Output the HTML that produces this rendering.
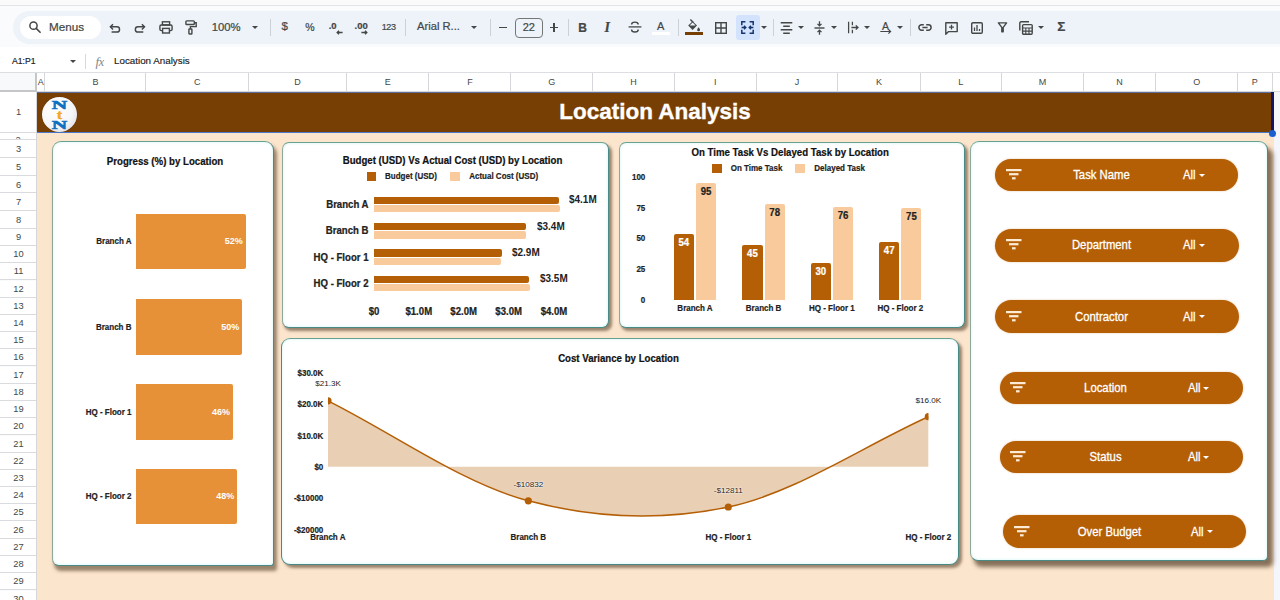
<!DOCTYPE html>
<html><head><meta charset="utf-8">
<style>
*{box-sizing:border-box;margin:0;padding:0}
html,body{width:1280px;height:600px;overflow:hidden;background:#fff;font-family:"Liberation Sans",sans-serif;}
#root{position:relative;width:1280px;height:600px;overflow:hidden;background:#f9fbfd}
.abs{position:absolute}
.t{position:absolute;white-space:nowrap;line-height:1}
#topstrip{left:0;top:0;width:1280px;height:5px;background:#fafafa}
#topline{left:0;top:5px;width:1280px;height:1px;background:#e3e4e6}
#toolbar{left:13px;top:11px;width:1290px;height:33px;background:#eef2f9;border-radius:17px}
#search{left:20px;top:16px;width:81px;height:23px;background:#fff;border-radius:12px}
#fbar{left:0;top:47px;width:1280px;height:25px;background:#fff}
#fline{left:0;top:72px;width:1280px;height:1px;background:#dcdee1}
.ui{color:#444746;font-size:12.5px;-webkit-text-stroke:.22px #444746}
.sep{position:absolute;top:19px;width:1px;height:17px;background:#cdd0d5}
.caret{position:absolute;width:0;height:0;border-left:3px solid transparent;border-right:3px solid transparent;border-top:3.2px solid #444746}
#colhdr{left:0;top:73px;width:1280px;height:19px;background:#fff}
.ch{position:absolute;top:73px;height:19px;border-right:1px solid #d5d7da;font-size:9px;color:#444746;text-align:center;line-height:19px}
.rh{position:absolute;left:0;width:37px;border-bottom:1px solid #d9dbde;background:#fff;font-size:9.3px;color:#444746;text-align:center}
#sheet{left:37px;top:92px;width:1237px;height:508px;background:#fce5cd}
#banner{left:37px;top:92px;width:1236px;height:41px;background:#783f04}
.card{position:absolute;background:#fff;border:1.5px solid #4a8a86;border-top-color:#6aa08f;border-left-color:#8fa89c;border-left-width:1.2px;border-radius:8px}
.pill{position:absolute;background:#b45f06;border-radius:17px;height:32.7px;box-shadow:0 0 2px rgba(180,95,6,.4)}
.pill .t{color:#fff;font-size:12.5px;top:10.6px;-webkit-text-stroke:.3px #fff;transform:scaleX(.905)}
svg{position:absolute;overflow:visible}
.b{font-weight:bold}
.ct{font-size:9.67px;color:#111;font-weight:bold;text-align:center;transform:translateY(.75px) scaleY(1.06);-webkit-text-stroke:.2px #111}
.l8{font-size:8px;color:#222;font-weight:bold;transform:translateY(.3px) scaleY(1.08);-webkit-text-stroke:.18px #222}
.l96{font-size:9.6px;color:#222;font-weight:bold;transform:scaleY(1.1);-webkit-text-stroke:.22px currentColor}
</style></head><body>
<div id="root">
<div class="abs" id="topstrip"></div><div class="abs" id="topline"></div>
<div class="abs" id="toolbar"></div><div class="abs" id="search"></div>
<div class="abs" id="fbar"></div><div class="abs" id="fline"></div>
<svg width="14" height="14" viewBox="0 0 14 14" style="left:27.5px;top:20.0px"><circle cx="5.5" cy="5.7" r="3.6" fill="none" stroke="#444746" stroke-width="1.5"/><path d="M8.2 8.4 L12.1 12.3" stroke="#444746" stroke-width="1.6" stroke-linecap="round"/></svg>
<div class="t ui" style="left:49px;top:21px;font-size:11.7px">Menus</div>
<svg width="1280" height="50" viewBox="0 0 1280 50" style="left:0;top:0"><g fill="none" stroke="#444746" stroke-width="1.45"><path d="M110.6 26.8 H116.9 a2.65 2.65 0 0 1 0 5.3 H111.6"/><path d="M113 24.2 L110.4 26.8 L113 29.4"/><path d="M144.3 26.8 H138 a2.65 2.65 0 0 0 0 5.3 H143.3"/><path d="M141.9 24.2 L144.5 26.8 L141.9 29.4"/><path d="M631.6 24.6 a3.3 2.5 0 0 1 6.6 0 M631.6 29.4 a3.3 2.6 0 0 0 6.6 0"/><path d="M628.6 26.9 H641.4" stroke-width="1.3"/></g></svg>
<svg width="14" height="13" viewBox="0 0 14 13" style="left:159.0px;top:21.0px"><rect x="3.4" y="0.8" width="7.2" height="3.2" fill="none" stroke="#444746" stroke-width="1.4"/><rect x="0.9" y="4" width="12.2" height="5.6" rx="1.4" fill="none" stroke="#444746" stroke-width="1.4"/><rect x="3.6" y="7.4" width="6.8" height="4.6" fill="#eef2f9" stroke="#444746" stroke-width="1.4"/></svg>
<svg width="12" height="15" viewBox="0 0 12 15" style="left:185.0px;top:20.0px"><rect x="0.9" y="0.9" width="8.4" height="3.6" rx="0.8" fill="none" stroke="#444746" stroke-width="1.4"/><path d="M9.3 2.7 H11.2 V6.6 H5.4 V9" fill="none" stroke="#444746" stroke-width="1.4"/><rect x="3.9" y="9" width="3" height="5" rx="0.6" fill="none" stroke="#444746" stroke-width="1.4"/></svg>
<div class="t ui" style="left:211.7px;top:22.2px;font-size:11.3px">100%</div>
<div class="caret" style="left:252px;top:25.7px"></div>
<div class="sep" style="left:269.5px"></div>
<div class="t ui" style="left:281.5px;top:21.3px;font-size:11.5px">$</div>
<div class="t ui" style="left:305.3px;top:21.5px;font-size:10.5px">%</div>
<div class="t ui b" style="left:328.7px;top:20.8px;font-size:9.5px">.0</div>
<svg width="7" height="5" viewBox="0 0 7 5" style="left:335.7px;top:29.9px"><path d="M6.6 2.5 H1.2 M3 0.7 L1.2 2.5 L3 4.3" fill="none" stroke="#444746" stroke-width="1.4"/></svg>
<div class="t ui b" style="left:354.5px;top:20.8px;font-size:9.5px">.00</div>
<svg width="7" height="5" viewBox="0 0 7 5" style="left:361.2px;top:29.9px"><path d="M0.4 2.5 H5.8 M4 0.7 L5.8 2.5 L4 4.3" fill="none" stroke="#444746" stroke-width="1.4"/></svg>
<div class="t ui" style="left:381.7px;top:22.6px;font-size:9px;letter-spacing:-.4px">123</div>
<div class="sep" style="left:404.5px"></div>
<div class="t ui" style="left:417px;top:21.3px;font-size:11.2px">Arial R...</div>
<div class="caret" style="left:471px;top:25.7px"></div>
<div class="sep" style="left:489.5px"></div>
<div class="abs" style="left:498.5px;top:26.6px;width:8.5px;height:1.5px;background:#444746"></div>
<div class="abs" style="left:515px;top:18px;width:27.5px;height:19.5px;border:1px solid #747775;border-radius:4px"></div>
<div class="t ui" style="left:515px;width:27.5px;text-align:center;top:22px;font-size:11px">22</div>
<div class="abs" style="left:549.8px;top:26.6px;width:8.5px;height:1.5px;background:#444746"></div><div class="abs" style="left:553.3px;top:23.1px;width:1.5px;height:8.5px;background:#444746"></div>
<div class="sep" style="left:567.5px"></div>
<div class="t ui b" style="left:578.3px;top:21.5px;font-size:12px">B</div>
<div class="t ui b" style="left:604.5px;top:20.5px;font-size:14px;font-style:italic;font-family:'Liberation Serif',serif">I</div>
<div class="t ui" style="left:657px;top:20.5px;font-size:11px">A</div>
<div class="abs" style="left:652px;top:31.5px;width:17.5px;height:3px;background:#fff"></div>
<div class="sep" style="left:677.5px"></div>
<svg width="15" height="13" viewBox="0 0 15 13" style="left:685.5px;top:19.0px"><path d="M2.2 6.6 L6.6 2.2 L11 6.6 L6.6 11 Z" fill="#444746"/><path d="M4.4 0.6 L7.4 3.6" stroke="#444746" stroke-width="1.4"/><path d="M3.6 6.4 H9.6 L6.6 3.4 Z" fill="#eef2f9"/><path d="M12.6 8.2 c0.9 1.3 1.4 2 1.4 2.7 a1.4 1.4 0 0 1 -2.8 0 c0 -0.7 0.5 -1.4 1.4 -2.7z" fill="#444746"/></svg>
<div class="abs" style="left:684.5px;top:32px;width:18px;height:3px;background:#783f04"></div>
<svg width="12" height="12" viewBox="0 0 12 12" style="left:715.0px;top:21.5px"><rect x="0.7" y="0.7" width="10.6" height="10.6" fill="none" stroke="#444746" stroke-width="1.4"/><path d="M6 0.7 V11.3 M0.7 6 H11.3" stroke="#444746" stroke-width="1.4"/></svg>
<div class="abs" style="left:735.5px;top:15px;width:24px;height:24.5px;background:#d3e3fd;border-radius:3px"></div>
<svg width="13" height="13" viewBox="0 0 13 13" style="left:741.0px;top:21.0px"><path d="M0.8 4.2 V0.8 H4.4 M8.6 0.8 H12.2 V4.2 M12.2 8.8 V12.2 H8.6 M4.4 12.2 H0.8 V8.8" fill="none" stroke="#17356b" stroke-width="1.5"/><path d="M0.6 6.5 H4.6 M3 4.7 L4.8 6.5 L3 8.3 M12.4 6.5 H8.4 M10 4.7 L8.2 6.5 L10 8.3" fill="none" stroke="#17356b" stroke-width="1.4"/></svg>
<div class="caret" style="left:761px;top:25.7px"></div>
<div class="sep" style="left:773px"></div>
<svg width="13" height="12" viewBox="0 0 13 12" style="left:780.0px;top:21.5px"><path d="M0.7 0.8 H12.3 M3.2 4.3 H9.8 M0.7 7.8 H12.3 M3.2 11.3 H9.8" stroke="#444746" stroke-width="1.5"/></svg>
<div class="caret" style="left:798px;top:25.7px"></div>
<svg width="11" height="14" viewBox="0 0 11 14" style="left:814.0px;top:20.5px"><path d="M0.5 7 H10.5" stroke="#444746" stroke-width="1.4"/><path d="M5.5 0.3 V4.6 M3.5 2.9 L5.5 4.9 L7.5 2.9 M5.5 13.7 V9.4 M3.5 11.1 L5.5 9.1 L7.5 11.1" fill="none" stroke="#444746" stroke-width="1.3"/></svg>
<div class="caret" style="left:831px;top:25.7px"></div>
<svg width="12" height="13" viewBox="0 0 12 13" style="left:846.5px;top:21.0px"><path d="M1.6 0.8 V12.2 M5.4 0.8 V4.2 M5.4 8.8 V12.2" stroke="#444746" stroke-width="1.25"/><path d="M4.4 6.5 H10.8 M8.8 4.4 L11 6.5 L8.8 8.6" fill="none" stroke="#444746" stroke-width="1.3"/></svg>
<div class="caret" style="left:864px;top:25.7px"></div>
<div class="t ui" style="left:882px;top:21px;font-size:10.5px">A</div>
<svg width="12" height="5" viewBox="0 0 12 5" style="left:880.0px;top:29.1px"><path d="M0.3 2.5 H10.6 M8.4 0.4 L10.6 2.5 L8.4 4.6" fill="none" stroke="#444746" stroke-width="1.2"/></svg>
<div class="caret" style="left:897px;top:25.7px"></div>
<div class="sep" style="left:910px"></div>
<svg width="14" height="7" viewBox="0 0 14 7" style="left:918.0px;top:24.0px"><path d="M5.8 0.8 H3.6 a2.7 2.7 0 0 0 0 5.4 H5.8 M8.2 0.8 H10.4 a2.7 2.7 0 0 1 0 5.4 H8.2 M4.4 3.5 H9.6" fill="none" stroke="#444746" stroke-width="1.5"/></svg>
<svg width="13" height="13" viewBox="0 0 13 13" style="left:945.0px;top:21.5px"><path d="M0.8 0.8 H12.2 V9.6 H3.6 L0.8 12.2 Z" fill="none" stroke="#444746" stroke-width="1.4" stroke-linejoin="round"/><path d="M6.5 2.8 V7.6 M4.1 5.2 H8.9" stroke="#444746" stroke-width="1.3"/></svg>
<svg width="12" height="12" viewBox="0 0 12 12" style="left:970.8px;top:21.5px"><rect x="0.7" y="0.7" width="10.6" height="10.6" rx="1.2" fill="none" stroke="#444746" stroke-width="1.4"/><path d="M3.5 9 V5.4 M6 9 V3 M8.5 9 V7" stroke="#444746" stroke-width="1.3"/></svg>
<svg width="11" height="11" viewBox="0 0 11 11" style="left:996.5px;top:22.0px"><path d="M1.4 0.9 H9.6 L6.2 5.4 V9.8 H4.8 V5.4 Z" fill="none" stroke="#444746" stroke-width="1.4" stroke-linejoin="round"/></svg>
<svg width="14" height="14" viewBox="0 0 14 14" style="left:1019.0px;top:20.5px"><path d="M0.8 9.4 V2 a1.2 1.2 0 0 1 1.2 -1.2 H10" fill="none" stroke="#444746" stroke-width="1.4"/><rect x="3.6" y="3.6" width="9.6" height="9.6" rx="1" fill="none" stroke="#444746" stroke-width="1.4"/><path d="M3.6 7 H13.2 M3.6 10.1 H13.2 M6.8 7 V13.2 M10 7 V13.2" stroke="#444746" stroke-width="1.1"/></svg>
<div class="caret" style="left:1038px;top:25.7px"></div>
<div class="t ui b" style="left:1057.3px;top:20.3px;font-size:13.5px">&Sigma;</div>
<div class="t" style="left:11.6px;top:56.2px;font-size:9.6px;color:#202124;-webkit-text-stroke:.2px #202124;transform:scaleX(.9);transform-origin:left center">A1:P1</div>
<div class="caret" style="left:69.5px;top:59.5px;border-left-width:3.2px;border-right-width:3.2px;border-top-width:3.6px"></div>
<div class="abs" style="left:85px;top:54px;width:1px;height:15px;background:#d6d8db"></div>
<div class="t" style="left:95.5px;top:54.5px;font-size:13px;color:#80868b;font-style:italic;font-family:'Liberation Serif',serif">f<span style="font-size:12px;margin-left:-.3px">x</span></div>
<div class="t" style="left:114px;top:56px;font-size:9.8px;color:#202124;-webkit-text-stroke:.15px #202124">Location Analysis</div>
<div class="abs" id="colhdr"></div>
<div class="ch" style="left:37px;width:8.3px">A</div>
<div class="ch" style="left:45.3px;width:101.2px">B</div>
<div class="ch" style="left:146.5px;width:102.5px">C</div>
<div class="ch" style="left:249px;width:98.0px">D</div>
<div class="ch" style="left:347px;width:82.4px">E</div>
<div class="ch" style="left:429.4px;width:82.0px">F</div>
<div class="ch" style="left:511.4px;width:81.6px">G</div>
<div class="ch" style="left:593px;width:82.0px">H</div>
<div class="ch" style="left:675px;width:81.6px">I</div>
<div class="ch" style="left:756.6px;width:81.9px">J</div>
<div class="ch" style="left:838.5px;width:82.0px">K</div>
<div class="ch" style="left:920.5px;width:81.7px">L</div>
<div class="ch" style="left:1002.2px;width:81.6px">M</div>
<div class="ch" style="left:1083.8px;width:72.6px">N</div>
<div class="ch" style="left:1156.4px;width:81.6px">O</div>
<div class="ch" style="left:1238px;width:34.5px">P</div>
<div class="abs" style="left:0;top:73px;width:37px;height:19px;background:#f8f9fa;border-right:2px solid #c4c7c5;border-bottom:2px solid #c4c7c5"></div>
<div class="abs" style="left:37px;top:91px;width:1243px;height:1px;background:#d5d7da"></div>
<div class="abs" id="sheet"></div>
<div class="abs" style="left:1274px;top:92px;width:6px;height:508px;background:#f5f6fb"></div>
<div class="rh" style="top:92.00px;height:41.00px;line-height:41.00px">1</div>
<div class="rh" style="top:133px;height:7.30px;overflow:hidden"><span style="position:absolute;left:0;width:36px;top:2.7px;line-height:9px">2</span></div>
<div class="rh" style="top:140.30px;height:17.70px;line-height:18.30px">3</div>
<div class="rh" style="top:158.00px;height:17.70px;line-height:18.30px">5</div>
<div class="rh" style="top:175.70px;height:17.60px;line-height:18.20px">6</div>
<div class="rh" style="top:193.30px;height:17.90px;line-height:18.50px">7</div>
<div class="rh" style="top:211.20px;height:17.50px;line-height:18.10px">8</div>
<div class="rh" style="top:228.70px;height:17.30px;line-height:17.90px">9</div>
<div class="rh" style="top:246.00px;height:17.30px;line-height:17.90px">10</div>
<div class="rh" style="top:263.30px;height:17.20px;line-height:17.80px">11</div>
<div class="rh" style="top:280.50px;height:17.20px;line-height:17.80px">12</div>
<div class="rh" style="top:297.70px;height:17.00px;line-height:17.60px">13</div>
<div class="rh" style="top:314.70px;height:17.30px;line-height:17.90px">14</div>
<div class="rh" style="top:332.00px;height:17.30px;line-height:17.90px">15</div>
<div class="rh" style="top:349.30px;height:17.20px;line-height:17.80px">16</div>
<div class="rh" style="top:366.50px;height:17.30px;line-height:17.90px">17</div>
<div class="rh" style="top:383.80px;height:17.20px;line-height:17.80px">18</div>
<div class="rh" style="top:401.00px;height:17.30px;line-height:17.90px">19</div>
<div class="rh" style="top:418.30px;height:17.20px;line-height:17.80px">20</div>
<div class="rh" style="top:435.50px;height:17.20px;line-height:17.80px">21</div>
<div class="rh" style="top:452.70px;height:17.20px;line-height:17.80px">22</div>
<div class="rh" style="top:469.90px;height:17.20px;line-height:17.80px">23</div>
<div class="rh" style="top:487.10px;height:17.10px;line-height:17.70px">24</div>
<div class="rh" style="top:504.20px;height:17.10px;line-height:17.70px">25</div>
<div class="rh" style="top:521.30px;height:17.40px;line-height:18.00px">26</div>
<div class="rh" style="top:538.70px;height:17.30px;line-height:17.90px">27</div>
<div class="rh" style="top:556.00px;height:17.30px;line-height:17.90px">28</div>
<div class="rh" style="top:573.30px;height:17.20px;line-height:17.80px">29</div>
<div class="rh" style="top:590.50px;height:17.30px;line-height:17.90px">30</div>
<div class="abs" style="left:36px;top:92px;width:1px;height:508px;background:#d5d7da"></div>
<div class="abs" id="banner"></div>
<div class="abs" style="left:37px;top:92px;width:1236px;height:1px;background:#5d6f9a"></div>
<div class="abs" style="left:37px;top:132px;width:1236px;height:1px;background:#4a78cc"></div>
<div class="abs" style="left:1271px;top:92px;width:2.5px;height:41px;background:#15145c"></div>
<div class="abs" style="left:1269px;top:129.8px;width:7px;height:7px;border-radius:50%;background:#1a5fd0"></div>
<div class="t b" style="left:37px;width:1236px;text-align:center;top:101.2px;font-size:22.5px;color:#fff;-webkit-text-stroke:.35px #fff">Location Analysis</div>
<div class="abs" style="left:41.5px;top:97px;width:35px;height:35px;border-radius:50%;background:radial-gradient(circle at 38% 35%,#ffffff 0%,#f6f6f8 55%,#d2d3d9 100%);box-shadow:0 0 1px rgba(0,0,0,.4)"></div>
<div class="t" style="left:41.5px;width:35px;text-align:center;top:99.2px;font-family:'Liberation Serif',serif;font-weight:bold;font-size:12.7px;color:#0f6fc0;-webkit-text-stroke:.55px #0f6fc0;transform:scaleX(1.68)">N</div>
<div class="t" style="left:41.5px;width:35px;text-align:center;top:108.8px;font-family:'Liberation Serif',serif;font-weight:bold;font-size:12px;color:#f5a623;-webkit-text-stroke:.5px #f5a623;transform:scaleX(1.25)">t</div>
<div class="t" style="left:41.5px;width:35px;text-align:center;top:119px;font-family:'Liberation Serif',serif;font-weight:bold;font-size:12.7px;color:#0f6fc0;-webkit-text-stroke:.55px #0f6fc0;transform:scaleX(1.68)">N</div>
<div class="card" style="left:51.5px;top:141px;width:222.5px;height:425px;border-radius:9px 9px 3px 7px;box-shadow:2.5px 4.5px 3.5px rgba(88,66,44,.6), inset 0 0 3px rgba(160,235,235,.55)"></div>
<div class="card" style="left:281.5px;top:142px;width:327.5px;height:185.5px;border-radius:7px;box-shadow:2.5px 3px 3px rgba(88,66,44,.6), inset 0 0 3px rgba(160,235,235,.55)"></div>
<div class="card" style="left:618.5px;top:142px;width:346.0px;height:185.5px;border-radius:7px;box-shadow:2.5px 3px 3px rgba(88,66,44,.6), inset 0 0 3px rgba(160,235,235,.55)"></div>
<div class="card" style="left:280.5px;top:338px;width:678.5px;height:226.5px;border-left:1.5px solid #4a8a86;border-radius:9px;box-shadow:3px 3px 3px rgba(88,66,44,.6), inset 0 0 3px rgba(160,235,235,.55)"></div>
<div class="card" style="left:969.5px;top:140.5px;width:298.5px;height:420.0px;border-radius:9px 9px 5px 8px;box-shadow:4.5px 6px 4px rgba(88,66,44,.72), inset 0 0 3px rgba(160,235,235,.55)"></div>
<div class="t ct" style="left:65px;width:200px;top:156px">Progress (%) by Location</div>
<div class="abs" style="left:136.4px;top:213.8px;width:109.6px;height:55.4px;background:#e69138;border-radius:0 2px 2px 0"></div>
<div class="t l8" style="left:30px;width:101.5px;text-align:right;top:238.1px">Branch A</div>
<div class="t b" style="left:202.7px;width:40px;text-align:right;top:237.1px;font-size:9px;color:#fff">52%</div>
<div class="abs" style="left:136.4px;top:299.4px;width:106.1px;height:55.4px;background:#e69138;border-radius:0 2px 2px 0"></div>
<div class="t l8" style="left:30px;width:101.5px;text-align:right;top:323.7px">Branch B</div>
<div class="t b" style="left:199.2px;width:40px;text-align:right;top:322.7px;font-size:9px;color:#fff">50%</div>
<div class="abs" style="left:136.4px;top:384.2px;width:96.9px;height:55.4px;background:#e69138;border-radius:0 2px 2px 0"></div>
<div class="t l8" style="left:30px;width:101.5px;text-align:right;top:408.5px">HQ - Floor 1</div>
<div class="t b" style="left:190.0px;width:40px;text-align:right;top:407.5px;font-size:9px;color:#fff">46%</div>
<div class="abs" style="left:136.4px;top:468.8px;width:101.1px;height:55.4px;background:#e69138;border-radius:0 2px 2px 0"></div>
<div class="t l8" style="left:30px;width:101.5px;text-align:right;top:493.1px">HQ - Floor 2</div>
<div class="t b" style="left:194.2px;width:40px;text-align:right;top:492.1px;font-size:9px;color:#fff">48%</div>
<div class="t ct" style="left:302.5px;width:300px;top:155.3px">Budget (USD) Vs Actual Cost (USD) by Location</div>
<div class="abs" style="left:366.5px;top:172px;width:9.5px;height:9.3px;background:#b45f06"></div>
<div class="t l8" style="left:385px;top:172.7px">Budget (USD)</div>
<div class="abs" style="left:450px;top:172px;width:9.5px;height:9.3px;background:#f9cb9c"></div>
<div class="t l8" style="left:469.2px;top:172.7px">Actual Cost (USD)</div>
<div class="abs" style="left:374px;top:196.5px;width:184.8px;height:7.2px;background:#b45f06;border-radius:0 2px 2px 0"></div>
<div class="abs" style="left:374px;top:204.8px;width:185.5px;height:7.3px;background:#f9cb9c;border-radius:0 2px 2px 0"></div>
<div class="t l96" style="left:268px;width:100.5px;text-align:right;top:199.7px">Branch A</div>
<div class="t b" style="left:568.6px;top:195.2px;font-size:10.4px;color:#222;transform:scaleX(.96);transform-origin:left center">$4.1M</div>
<div class="abs" style="left:374px;top:223px;width:152.2px;height:7.2px;background:#b45f06;border-radius:0 2px 2px 0"></div>
<div class="abs" style="left:374px;top:231.3px;width:152.2px;height:7.3px;background:#f9cb9c;border-radius:0 2px 2px 0"></div>
<div class="t l96" style="left:268px;width:100.5px;text-align:right;top:226.2px">Branch B</div>
<div class="t b" style="left:536.9px;top:221.7px;font-size:10.4px;color:#222;transform:scaleX(.96);transform-origin:left center">$3.4M</div>
<div class="abs" style="left:374px;top:249.4px;width:127.7px;height:7.2px;background:#b45f06;border-radius:0 2px 2px 0"></div>
<div class="abs" style="left:374px;top:257.7px;width:127.0px;height:7.3px;background:#f9cb9c;border-radius:0 2px 2px 0"></div>
<div class="t l96" style="left:268px;width:100.5px;text-align:right;top:252.6px">HQ - Floor 1</div>
<div class="t b" style="left:512.4px;top:248.1px;font-size:10.4px;color:#222;transform:scaleX(.96);transform-origin:left center">$2.9M</div>
<div class="abs" style="left:374px;top:275.7px;width:155.4px;height:7.2px;background:#b45f06;border-radius:0 2px 2px 0"></div>
<div class="abs" style="left:374px;top:284.0px;width:156.0px;height:7.3px;background:#f9cb9c;border-radius:0 2px 2px 0"></div>
<div class="t l96" style="left:268px;width:100.5px;text-align:right;top:278.9px">HQ - Floor 2</div>
<div class="t b" style="left:539.7px;top:274.4px;font-size:10.4px;color:#222;transform:scaleX(.96);transform-origin:left center">$3.5M</div>
<div class="t l96" style="left:344px;width:60px;text-align:center;top:306.5px">$0</div>
<div class="t l96" style="left:388.8px;width:60px;text-align:center;top:306.5px">$1.0M</div>
<div class="t l96" style="left:433.7px;width:60px;text-align:center;top:306.5px">$2.0M</div>
<div class="t l96" style="left:478.7px;width:60px;text-align:center;top:306.5px">$3.0M</div>
<div class="t l96" style="left:524px;width:60px;text-align:center;top:306.5px">$4.0M</div>
<div class="t ct" style="left:640.2px;width:300px;top:147.3px">On Time Task Vs Delayed Task by Location</div>
<div class="abs" style="left:712.2px;top:163.8px;width:9.6px;height:9.5px;background:#b45f06"></div>
<div class="t l8" style="left:730.7px;top:164.9px">On Time Task</div>
<div class="abs" style="left:795.2px;top:163.8px;width:9.6px;height:9.5px;background:#f9cb9c"></div>
<div class="t l8" style="left:814.3px;top:164.9px">Delayed Task</div>
<div class="t l8" style="left:605px;width:40.3px;text-align:right;top:173.8px">100</div>
<div class="t l8" style="left:605px;width:40.3px;text-align:right;top:204.6px">75</div>
<div class="t l8" style="left:605px;width:40.3px;text-align:right;top:235.2px">50</div>
<div class="t l8" style="left:605px;width:40.3px;text-align:right;top:265.9px">25</div>
<div class="t l8" style="left:605px;width:40.3px;text-align:right;top:296.6px">0</div>
<div class="abs" style="left:673.7px;top:233.7px;width:20.3px;height:66.3px;background:#b45f06;border-radius:2px 2px 0 0"></div>
<div class="abs" style="left:696.1px;top:183.3px;width:20px;height:116.7px;background:#f9cb9c;border-radius:2px 2px 0 0"></div>
<div class="t l96" style="left:663.7px;width:40.3px;text-align:center;top:237.8px;color:#fff">54</div>
<div class="t l96" style="left:686.1px;width:40px;text-align:center;top:187.4px">95</div>
<div class="t l8" style="left:655.0px;width:80px;text-align:center;top:304.6px">Branch A</div>
<div class="abs" style="left:742.3px;top:244.7px;width:20.3px;height:55.3px;background:#b45f06;border-radius:2px 2px 0 0"></div>
<div class="abs" style="left:764.7px;top:204.2px;width:20px;height:95.8px;background:#f9cb9c;border-radius:2px 2px 0 0"></div>
<div class="t l96" style="left:732.3px;width:40.3px;text-align:center;top:248.8px;color:#fff">45</div>
<div class="t l96" style="left:754.7px;width:40px;text-align:center;top:208.3px">78</div>
<div class="t l8" style="left:723.6px;width:80px;text-align:center;top:304.6px">Branch B</div>
<div class="abs" style="left:810.6px;top:263.2px;width:20.3px;height:36.8px;background:#b45f06;border-radius:2px 2px 0 0"></div>
<div class="abs" style="left:833.0px;top:206.7px;width:20px;height:93.3px;background:#f9cb9c;border-radius:2px 2px 0 0"></div>
<div class="t l96" style="left:800.6px;width:40.3px;text-align:center;top:267.3px;color:#fff">30</div>
<div class="t l96" style="left:823.0px;width:40px;text-align:center;top:210.8px">76</div>
<div class="t l8" style="left:791.9px;width:80px;text-align:center;top:304.6px">HQ - Floor 1</div>
<div class="abs" style="left:879px;top:242.3px;width:20.3px;height:57.7px;background:#b45f06;border-radius:2px 2px 0 0"></div>
<div class="abs" style="left:901.4px;top:207.9px;width:20px;height:92.1px;background:#f9cb9c;border-radius:2px 2px 0 0"></div>
<div class="t l96" style="left:869.0px;width:40.3px;text-align:center;top:246.4px;color:#fff">47</div>
<div class="t l96" style="left:891.4px;width:40px;text-align:center;top:212.0px">75</div>
<div class="t l8" style="left:860.3px;width:80px;text-align:center;top:304.6px">HQ - Floor 2</div>
<div class="t ct" style="left:468.5px;width:300px;top:352.8px">Cost Variance by Location</div>
<div class="t l8" style="left:273px;width:50.3px;text-align:right;top:370.1px">$30.0K</div>
<div class="t l8" style="left:273px;width:50.3px;text-align:right;top:401.4px">$20.0K</div>
<div class="t l8" style="left:273px;width:50.3px;text-align:right;top:432.7px">$10.0K</div>
<div class="t l8" style="left:273px;width:50.3px;text-align:right;top:463.6px">$0</div>
<div class="t l8" style="left:273px;width:50.3px;text-align:right;top:495.2px">-$10000</div>
<div class="t l8" style="left:273px;width:50.3px;text-align:right;top:527.1px">-$20000</div>
<svg width="1280" height="600" style="left:0;top:0" viewBox="0 0 1280 600">
<defs><clipPath id="cv"><rect x="328" y="360" width="600.5" height="190"/></clipPath></defs>
<path d="M328,400.8 C394.7,434.1 461.6,483.1 528.3,500.8 C594.9,518.5 661.6,521 728.3,507 C795,493 861.7,446.8 928.3,416.7 L928.3,466.8 L328,466.8 Z" fill="#e9cfb3"/>
<path d="M328,400.8 C394.7,434.1 461.6,483.1 528.3,500.8 C594.9,518.5 661.6,521 728.3,507 C795,493 861.7,446.8 928.3,416.7" fill="none" stroke="#b45f06" stroke-width="1.5"/>
<g clip-path="url(#cv)" fill="#b45f06"><circle cx="328" cy="400.8" r="3.6"/><circle cx="528.3" cy="500.8" r="3.6"/><circle cx="728.3" cy="507" r="3.6"/><circle cx="928.3" cy="416.7" r="3.6"/></g>
</svg>
<div class="t" style="left:298px;width:60px;text-align:center;top:380.3px;font-size:8.1px;color:#222;text-shadow:0 0 1.5px #fff,0 0 1.5px #fff,0 0 2px #fff">$21.3K</div>
<div class="t" style="left:498.29999999999995px;width:60px;text-align:center;top:480.7px;font-size:8.1px;color:#222;text-shadow:0 0 1.5px #fff,0 0 1.5px #fff,0 0 2px #fff">-$10832</div>
<div class="t" style="left:698.3px;width:60px;text-align:center;top:487.0px;font-size:8.1px;color:#222;text-shadow:0 0 1.5px #fff,0 0 1.5px #fff,0 0 2px #fff">-$12811</div>
<div class="t" style="left:898.3px;width:60px;text-align:center;top:396.5px;font-size:8.1px;color:#222;text-shadow:0 0 1.5px #fff,0 0 1.5px #fff,0 0 2px #fff">$16.0K</div>
<div class="t l8" style="left:287.8px;width:80px;text-align:center;top:533.8px">Branch A</div>
<div class="t l8" style="left:488.29999999999995px;width:80px;text-align:center;top:533.8px">Branch B</div>
<div class="t l8" style="left:688.3px;width:80px;text-align:center;top:533.8px">HQ - Floor 1</div>
<div class="t l8" style="left:888.3px;width:80px;text-align:center;top:533.8px">HQ - Floor 2</div>
<div class="pill" style="left:995.3px;top:158.7px;width:242.7px"><svg width="16" height="11" style="left:10.6px;top:10.5px" viewBox="0 0 16 11"><rect x="0" y="0" width="15.5" height="2.2" fill="#fdebd6"/><rect x="3" y="4.1" width="9.5" height="2.2" fill="#fdebd6"/><rect x="6" y="8.2" width="3.6" height="2.2" fill="#fdebd6"/></svg><div class="t" style="left:45.8px;width:121px;text-align:center">Task Name</div><div class="t" style="left:188.2px;transform-origin:left center">All</div><div class="caret" style="left:203.5px;top:15px;border-top-color:#fff;border-left-width:3.3px;border-right-width:3.3px;border-top-width:3.6px"></div></div>
<div class="pill" style="left:995.3px;top:228.9px;width:243.7px"><svg width="16" height="11" style="left:10.6px;top:10.5px" viewBox="0 0 16 11"><rect x="0" y="0" width="15.5" height="2.2" fill="#fdebd6"/><rect x="3" y="4.1" width="9.5" height="2.2" fill="#fdebd6"/><rect x="6" y="8.2" width="3.6" height="2.2" fill="#fdebd6"/></svg><div class="t" style="left:45.8px;width:121px;text-align:center">Department</div><div class="t" style="left:188.2px;transform-origin:left center">All</div><div class="caret" style="left:203.5px;top:15px;border-top-color:#fff;border-left-width:3.3px;border-right-width:3.3px;border-top-width:3.6px"></div></div>
<div class="pill" style="left:995.3px;top:300.2px;width:243.7px"><svg width="16" height="11" style="left:10.6px;top:10.5px" viewBox="0 0 16 11"><rect x="0" y="0" width="15.5" height="2.2" fill="#fdebd6"/><rect x="3" y="4.1" width="9.5" height="2.2" fill="#fdebd6"/><rect x="6" y="8.2" width="3.6" height="2.2" fill="#fdebd6"/></svg><div class="t" style="left:45.8px;width:121px;text-align:center">Contractor</div><div class="t" style="left:188.2px;transform-origin:left center">All</div><div class="caret" style="left:203.5px;top:15px;border-top-color:#fff;border-left-width:3.3px;border-right-width:3.3px;border-top-width:3.6px"></div></div>
<div class="pill" style="left:999.6px;top:371.7px;width:243.7px"><svg width="16" height="11" style="left:10.6px;top:10.5px" viewBox="0 0 16 11"><rect x="0" y="0" width="15.5" height="2.2" fill="#fdebd6"/><rect x="3" y="4.1" width="9.5" height="2.2" fill="#fdebd6"/><rect x="6" y="8.2" width="3.6" height="2.2" fill="#fdebd6"/></svg><div class="t" style="left:45.8px;width:121px;text-align:center">Location</div><div class="t" style="left:188.2px;transform-origin:left center">All</div><div class="caret" style="left:203.5px;top:15px;border-top-color:#fff;border-left-width:3.3px;border-right-width:3.3px;border-top-width:3.6px"></div></div>
<div class="pill" style="left:999.6px;top:440.8px;width:243.7px"><svg width="16" height="11" style="left:10.6px;top:10.5px" viewBox="0 0 16 11"><rect x="0" y="0" width="15.5" height="2.2" fill="#fdebd6"/><rect x="3" y="4.1" width="9.5" height="2.2" fill="#fdebd6"/><rect x="6" y="8.2" width="3.6" height="2.2" fill="#fdebd6"/></svg><div class="t" style="left:45.8px;width:121px;text-align:center">Status</div><div class="t" style="left:188.2px;transform-origin:left center">All</div><div class="caret" style="left:203.5px;top:15px;border-top-color:#fff;border-left-width:3.3px;border-right-width:3.3px;border-top-width:3.6px"></div></div>
<div class="pill" style="left:1003.3px;top:515.3px;width:242.6px"><svg width="16" height="11" style="left:10.6px;top:10.5px" viewBox="0 0 16 11"><rect x="0" y="0" width="15.5" height="2.2" fill="#fdebd6"/><rect x="3" y="4.1" width="9.5" height="2.2" fill="#fdebd6"/><rect x="6" y="8.2" width="3.6" height="2.2" fill="#fdebd6"/></svg><div class="t" style="left:45.8px;width:121px;text-align:center">Over Budget</div><div class="t" style="left:188.2px;transform-origin:left center">All</div><div class="caret" style="left:203.5px;top:15px;border-top-color:#fff;border-left-width:3.3px;border-right-width:3.3px;border-top-width:3.6px"></div></div>
</div>
</body></html>
